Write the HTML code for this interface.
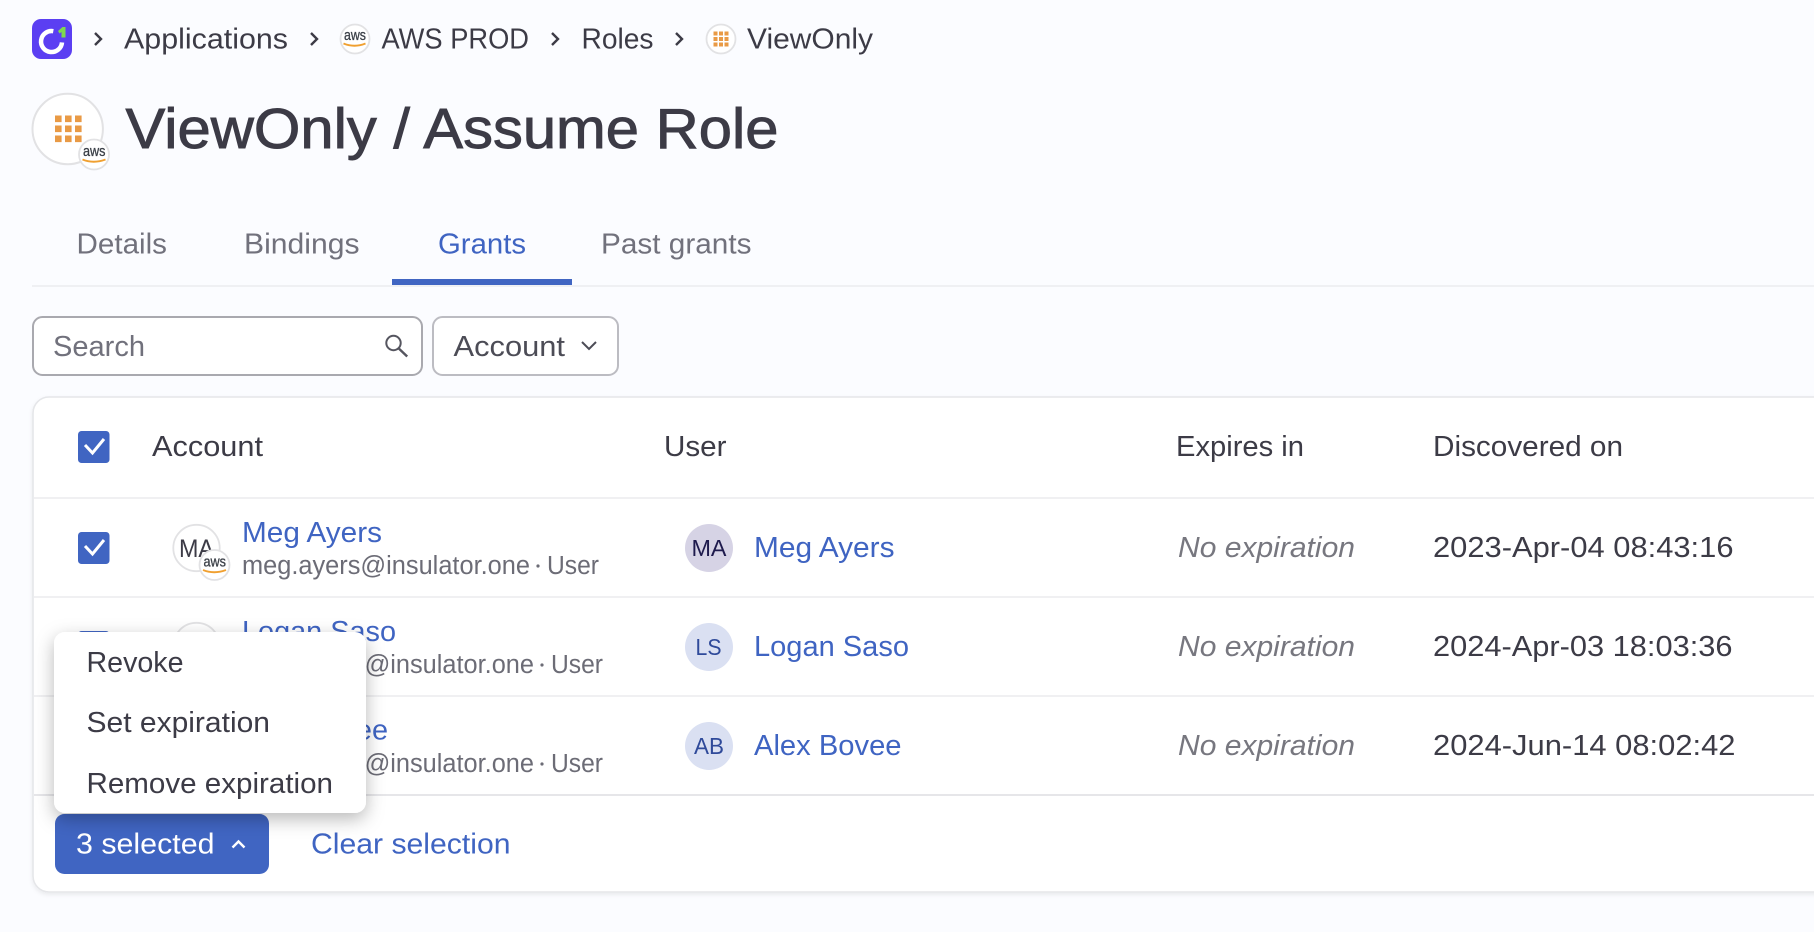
<!DOCTYPE html>
<html><head><meta charset="utf-8"><style>
html,body{margin:0;padding:0;width:1814px;height:932px;overflow:hidden;background:#fbfcff}
svg{display:block}
text{font-family:"Liberation Sans",sans-serif;font-size:28.5px;fill:#3c3b46}
.l{fill:#3f64c2}.t{fill:#71717c}.s{font-size:25.5px;fill:#6c6c76}.i{font-style:italic;fill:#77777f}
.a{font-size:14.5px;fill:#3a3f47;stroke:#3a3f47;stroke-width:.3}
</style></head><body>
<svg width="1814" height="932" viewBox="0 0 1814 932" xmlns="http://www.w3.org/2000/svg">
<defs>
<filter id="sh" x="-20%" y="-20%" width="140%" height="150%"><feDropShadow dx="0" dy="6" stdDeviation="9" flood-color="#000" flood-opacity=".28"/></filter>
<filter id="cs" x="-5%" y="-5%" width="110%" height="110%"><feDropShadow dx="0" dy="2" stdDeviation="2" flood-color="#000" flood-opacity=".07"/></filter>
</defs>
<rect width="1814" height="932" fill="#fbfcff"/>

<!-- breadcrumb -->
<rect x="32" y="19" width="40" height="40" rx="9" fill="#5b3ff2"/>
<path d="M53.3 31.2A10.5 10.5 0 1 0 62 42.4" fill="none" stroke="#fff" stroke-width="4.5"/>
<path d="M58 31l4.5-4h3v10.5h-4V32l-2 1.5z" fill="#7ed94e"/>
<path d="M95 33l6 6-6 6M311 33l6 6-6 6M552 33l6 6-6 6M676 33l6 6-6 6" fill="none" stroke="#3c3b46" stroke-width="2.4"/>
<text x="124" y="48.5" textLength="164" lengthAdjust="spacingAndGlyphs">Applications</text>
<circle cx="355" cy="39" r="14.5" fill="#fff" stroke="#e2e2e4" stroke-width="1.8"/>
<text class="a" x="344" y="40" textLength="22" lengthAdjust="spacingAndGlyphs">aws</text>
<path d="M343.5 43.5q11 4.5 22 0" fill="none" stroke="#f0a030" stroke-width="1.9"/>
<text x="381.5" y="48.5" textLength="147.5" lengthAdjust="spacingAndGlyphs">AWS PROD</text>
<text x="581.5" y="48.5" textLength="72" lengthAdjust="spacingAndGlyphs">Roles</text>
<circle cx="721" cy="39" r="14.5" fill="#fff" stroke="#e2e2e4" stroke-width="1.8"/>
<path d="M713.5 31.5h4v4h-4zM719 31.5h4v4h-4zM724.5 31.5h4v4h-4zM713.5 37h4v4h-4zM719 37h4v4h-4zM724.5 37h4v4h-4zM713.5 42.5h4v4h-4zM719 42.5h4v4h-4zM724.5 42.5h4v4h-4z" fill="#e99a45"/>
<text x="747" y="48.5" textLength="126" lengthAdjust="spacingAndGlyphs">ViewOnly</text>

<!-- title -->
<circle cx="67.7" cy="129" r="35.2" fill="#fff" stroke="#e2e2e4" stroke-width="2"/>
<path d="M55 115.5h6.6v6.6H55zM65 115.5h6.6v6.6H65zM75 115.5h6.6v6.6H75zM55 125.5h6.6v6.6H55zM65 125.5h6.6v6.6H65zM75 125.5h6.6v6.6H75zM55 135.5h6.6v6.6H55zM65 135.5h6.6v6.6H65zM75 135.5h6.6v6.6H75z" fill="#e99a45"/>
<circle cx="94" cy="154.5" r="15" fill="#fff" stroke="#e2e2e4" stroke-width="1.8"/>
<text class="a" x="83" y="156" textLength="22.5" lengthAdjust="spacingAndGlyphs">aws</text>
<path d="M82.5 159.5q11 4.5 23 0" fill="none" stroke="#f0a030" stroke-width="1.9"/>
<text x="125.5" y="148" textLength="653" lengthAdjust="spacingAndGlyphs" style="font-size:57px;stroke:#3c3b46;stroke-width:.9">ViewOnly / Assume Role</text>

<!-- tabs -->
<text class="t" x="76.5" y="253.5" textLength="90.5" lengthAdjust="spacingAndGlyphs">Details</text>
<text class="t" x="244" y="253.5" textLength="115.5" lengthAdjust="spacingAndGlyphs">Bindings</text>
<text class="l" x="438" y="253.5" textLength="88" lengthAdjust="spacingAndGlyphs">Grants</text>
<text class="t" x="601" y="253.5" textLength="150.5" lengthAdjust="spacingAndGlyphs">Past grants</text>
<rect x="32" y="285" width="1782" height="2" fill="#eff0f3"/>
<rect x="392" y="279" width="180" height="6" fill="#4065c2"/>

<!-- filters -->
<rect x="33" y="317" width="389" height="58" rx="9.5" fill="#fff" stroke="#a9a9af" stroke-width="2"/>
<text class="t" x="53" y="356" textLength="92" lengthAdjust="spacingAndGlyphs">Search</text>
<circle cx="393.5" cy="343" r="7.2" fill="none" stroke="#55555f" stroke-width="2"/>
<path d="M398.8 348.5l8.4 8" fill="none" stroke="#55555f" stroke-width="2.4"/>
<rect x="433" y="317" width="185" height="58" rx="9.5" fill="#fff" stroke="#bcbcc2" stroke-width="2"/>
<text x="453.5" y="356" textLength="111.5" lengthAdjust="spacingAndGlyphs" style="fill:#4c4c56">Account</text>
<path d="M582 342l7 7 7-7" fill="none" stroke="#4c4c56" stroke-width="2"/>

<!-- table -->
<rect x="33" y="397" width="1820" height="495" rx="16" fill="#fff" stroke="#e5e6e9" stroke-width="1.6" filter="url(#cs)"/>
<rect x="34" y="497" width="1780" height="2" fill="#f0f0f2"/>
<rect x="34" y="596" width="1780" height="2" fill="#f0f0f2"/>
<rect x="34" y="695" width="1780" height="2" fill="#f0f0f2"/>
<rect x="34" y="794" width="1780" height="2" fill="#e6e6e9"/>

<!-- header -->
<rect x="78" y="431" width="31.5" height="32" rx="3.5" fill="#4065c2"/>
<path d="M85 445l7.5 8 11.5-14" fill="none" stroke="#fff" stroke-width="3"/>
<text x="152" y="456" textLength="111" lengthAdjust="spacingAndGlyphs">Account</text>
<text x="664" y="456" textLength="62.5" lengthAdjust="spacingAndGlyphs">User</text>
<text x="1176" y="456" textLength="128" lengthAdjust="spacingAndGlyphs">Expires in</text>
<text x="1433" y="456" textLength="190" lengthAdjust="spacingAndGlyphs">Discovered on</text>

<!-- row 1 -->
<rect x="78" y="532" width="31.5" height="32" rx="3.5" fill="#4065c2"/>
<path d="M85 546l7.5 8 11.5-14" fill="none" stroke="#fff" stroke-width="3"/>
<circle cx="196.5" cy="548" r="23.2" fill="#fff" stroke="#e2e2e4" stroke-width="1.8"/>
<text x="179" y="557" textLength="35" lengthAdjust="spacingAndGlyphs" style="font-size:25px">MA</text>
<circle cx="214.5" cy="565" r="15" fill="#fff" stroke="#e2e2e4" stroke-width="1.8"/>
<text class="a" x="203.5" y="566.5" textLength="22.5" lengthAdjust="spacingAndGlyphs">aws</text>
<path d="M203 570q11 4.5 23 0" fill="none" stroke="#f0a030" stroke-width="1.9"/>
<text class="l" x="242" y="542" textLength="140" lengthAdjust="spacingAndGlyphs">Meg Ayers</text>
<text class="s" x="242" y="574" textLength="288" lengthAdjust="spacingAndGlyphs">meg.ayers@insulator.one</text>
<circle cx="538" cy="566" r="1.6" fill="#6c6c76"/>
<text class="s" x="547" y="574" textLength="52" lengthAdjust="spacingAndGlyphs">User</text>
<circle cx="709" cy="548" r="24" fill="#d6d3e5"/>
<text x="691.5" y="556" textLength="35" lengthAdjust="spacingAndGlyphs" style="font-size:23px;fill:#1e1a4d">MA</text>
<text class="l" x="754" y="557" textLength="140.5" lengthAdjust="spacingAndGlyphs">Meg Ayers</text>
<text class="i" x="1178" y="557" textLength="177" lengthAdjust="spacingAndGlyphs">No expiration</text>
<text x="1433" y="557" textLength="300.5" lengthAdjust="spacingAndGlyphs">2023-Apr-04 08:43:16</text>

<!-- row 2 -->
<rect x="78" y="631" width="31.5" height="32" rx="3.5" fill="#4065c2"/>
<circle cx="196.5" cy="646" r="23.2" fill="#fff" stroke="#e2e2e4" stroke-width="1.8"/>
<text class="l" x="242" y="641" textLength="154" lengthAdjust="spacingAndGlyphs">Logan Saso</text>
<text class="s" x="242" y="673" textLength="292" lengthAdjust="spacingAndGlyphs">logan.saso@insulator.one</text>
<circle cx="542" cy="665" r="1.6" fill="#6c6c76"/>
<text class="s" x="551" y="673" textLength="52" lengthAdjust="spacingAndGlyphs">User</text>
<circle cx="709" cy="647" r="24" fill="#dae0f2"/>
<text x="695.5" y="655" textLength="26" lengthAdjust="spacingAndGlyphs" style="font-size:23px;fill:#2f4a9a">LS</text>
<text class="l" x="754" y="656" textLength="155" lengthAdjust="spacingAndGlyphs">Logan Saso</text>
<text class="i" x="1178" y="656" textLength="177" lengthAdjust="spacingAndGlyphs">No expiration</text>
<text x="1433" y="656" textLength="299.5" lengthAdjust="spacingAndGlyphs">2024-Apr-03 18:03:36</text>

<!-- row 3 -->
<text class="l" x="242" y="739.5" textLength="146" lengthAdjust="spacingAndGlyphs">Alex Bovee</text>
<text class="s" x="242" y="772" textLength="292" lengthAdjust="spacingAndGlyphs">alex.bovee@insulator.one</text>
<circle cx="542" cy="764" r="1.6" fill="#6c6c76"/>
<text class="s" x="551" y="772" textLength="52" lengthAdjust="spacingAndGlyphs">User</text>
<circle cx="709" cy="746" r="24" fill="#dae0f2"/>
<text x="694" y="754" textLength="30" lengthAdjust="spacingAndGlyphs" style="font-size:23px;fill:#2f4a9a">AB</text>
<text class="l" x="754" y="755" textLength="147.5" lengthAdjust="spacingAndGlyphs">Alex Bovee</text>
<text class="i" x="1178" y="755" textLength="177" lengthAdjust="spacingAndGlyphs">No expiration</text>
<text x="1433" y="755" textLength="302.5" lengthAdjust="spacingAndGlyphs">2024-Jun-14 08:02:42</text>

<!-- footer -->
<rect x="55" y="814" width="214" height="60" rx="9.5" fill="#4065c2"/>
<text x="76" y="853.5" textLength="138.5" lengthAdjust="spacingAndGlyphs" style="fill:#fff">3 selected</text>
<path d="M232.5 847.5l6-6 6 6" fill="none" stroke="#fff" stroke-width="2.4"/>
<text class="l" x="311" y="853.5" textLength="199.5" lengthAdjust="spacingAndGlyphs">Clear selection</text>

<!-- menu -->
<rect x="54" y="632" width="312" height="181" rx="11" fill="#fff" filter="url(#sh)"/>
<text x="86.5" y="672" textLength="97" lengthAdjust="spacingAndGlyphs">Revoke</text>
<text x="86.5" y="732" textLength="183.5" lengthAdjust="spacingAndGlyphs">Set expiration</text>
<text x="86.5" y="793" textLength="246.5" lengthAdjust="spacingAndGlyphs">Remove expiration</text>
</svg>
</body></html>
